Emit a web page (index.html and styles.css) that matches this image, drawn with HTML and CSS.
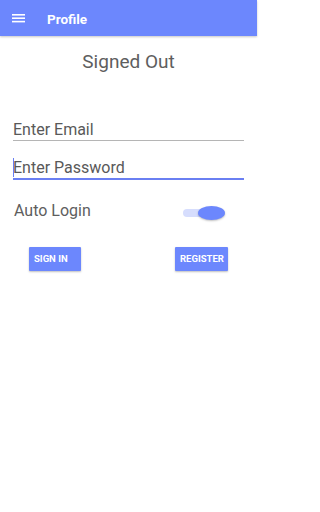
FILE: index.html
```html
<!DOCTYPE html>
<html lang="en">
<head>
<meta charset="utf-8">
<meta name="viewport" content="width=257">
<title>Profile</title>
<link rel="stylesheet" href="styles.css">
</head>
<body>
<div class="screen">
<header class="appbar">
  <svg class="menu-icon" width="13" height="10" viewBox="0 0 13 10" aria-hidden="true">
    <rect x="0" y="0" width="13" height="1.6" fill="#fff"/>
    <rect x="0" y="3.4" width="13" height="1.6" fill="#fff"/>
    <rect x="0" y="6.8" width="13" height="1.6" fill="#fff"/>
  </svg>
  <span class="appbar-title">Profile</span>
</header>
<main class="content">
  <h1 class="status">Signed Out</h1>
  <div class="field">
    <span class="placeholder">Enter Email</span>
  </div>
  <div class="field field-focused">
    <span class="caret"></span><span class="placeholder">Enter Password</span>
  </div>
  <div class="toggle-row">
    <span class="toggle-label">Auto Login</span>
    <span class="switch"><span class="switch-track"></span><span class="switch-thumb"></span></span>
  </div>
  <div class="actions">
    <button class="btn">SIGN IN</button>
    <button class="btn">REGISTER</button>
  </div>
</main>
</div>
</body>
</html>
```
FILE: styles.css
```css
html, body {
  margin: 0;
  padding: 0;
  background: #ffffff;
  font-family: Roboto, "Liberation Sans", sans-serif;
}

.screen {
  width: 257px;
  min-height: 512px;
}

.appbar {
  height: 36px;
  background: #6c87fd;
  display: flex;
  align-items: center;
  padding-left: 12px;
  box-shadow: 0 1px 2px rgba(0, 0, 0, 0.22);
  box-sizing: border-box;
}

.menu-icon {
  display: block;
  margin-top: 1px;
}

.appbar-title {
  margin-left: 22px;
  color: #ffffff;
  font-weight: 700;
  font-size: 13.5px;
  line-height: 16px;
  margin-top: 1px;
}

.content {
  display: flex;
  flex-direction: column;
  padding: 0 13px;
}

.status {
  margin: 15px 0 0;
  text-align: center;
  font-weight: 400;
  font-size: 19px;
  line-height: 22px;
  color: #5e5e5e;
}

.field {
  display: flex;
  align-items: center;
  height: 19px;
  padding-bottom: 1px;
  border-bottom: 1px solid #b5b5b5;
  font-size: 16px;
  line-height: 19px;
  color: #595959;
  margin-top: 47px;
}

.field-focused {
  margin-top: 17px;
  border-bottom: 2px solid #6a7ff2;
  position: relative;
}

.caret {
  position: absolute;
  left: 0;
  top: 0;
  width: 1px;
  height: 19px;
  background: #6a7ff2;
}

.toggle-row {
  display: flex;
  align-items: center;
  justify-content: space-between;
  margin-top: 21px;
  padding: 0 19px 0 1px;
  height: 19px;
}

.toggle-label {
  font-size: 16px;
  line-height: 19px;
  color: #5e5e5e;
}

.switch {
  position: relative;
  width: 42px;
  height: 14px;
  display: block;
  margin-top: 5px;
}

.switch-track {
  position: absolute;
  left: 0;
  top: 3px;
  width: 32px;
  height: 8px;
  border-radius: 4px;
  background: #d6ddfd;
}

.switch-thumb {
  position: absolute;
  right: 0;
  top: 0;
  width: 27px;
  height: 14px;
  border-radius: 50%;
  background: #6c87fd;
  box-shadow: 0 1px 2px rgba(0, 0, 0, 0.25);
}

.actions {
  display: flex;
  justify-content: space-between;
  padding: 0 16px;
  margin-top: 27px;
}

.btn {
  height: 24px;
  padding: 0 5px;
  border: none;
  border-radius: 1px;
  background: #6c87fd;
  color: #ffffff;
  font-family: Roboto, "Liberation Sans", sans-serif;
  font-weight: 700;
  font-size: 9.5px;
  line-height: 24px;
  box-shadow: 0 1px 2px rgba(0, 0, 0, 0.25);
}

.btn:first-child {
  width: 52px;
  text-align: left;
}

.btn:last-child {
  width: 53px;
  text-align: center;
}
```
